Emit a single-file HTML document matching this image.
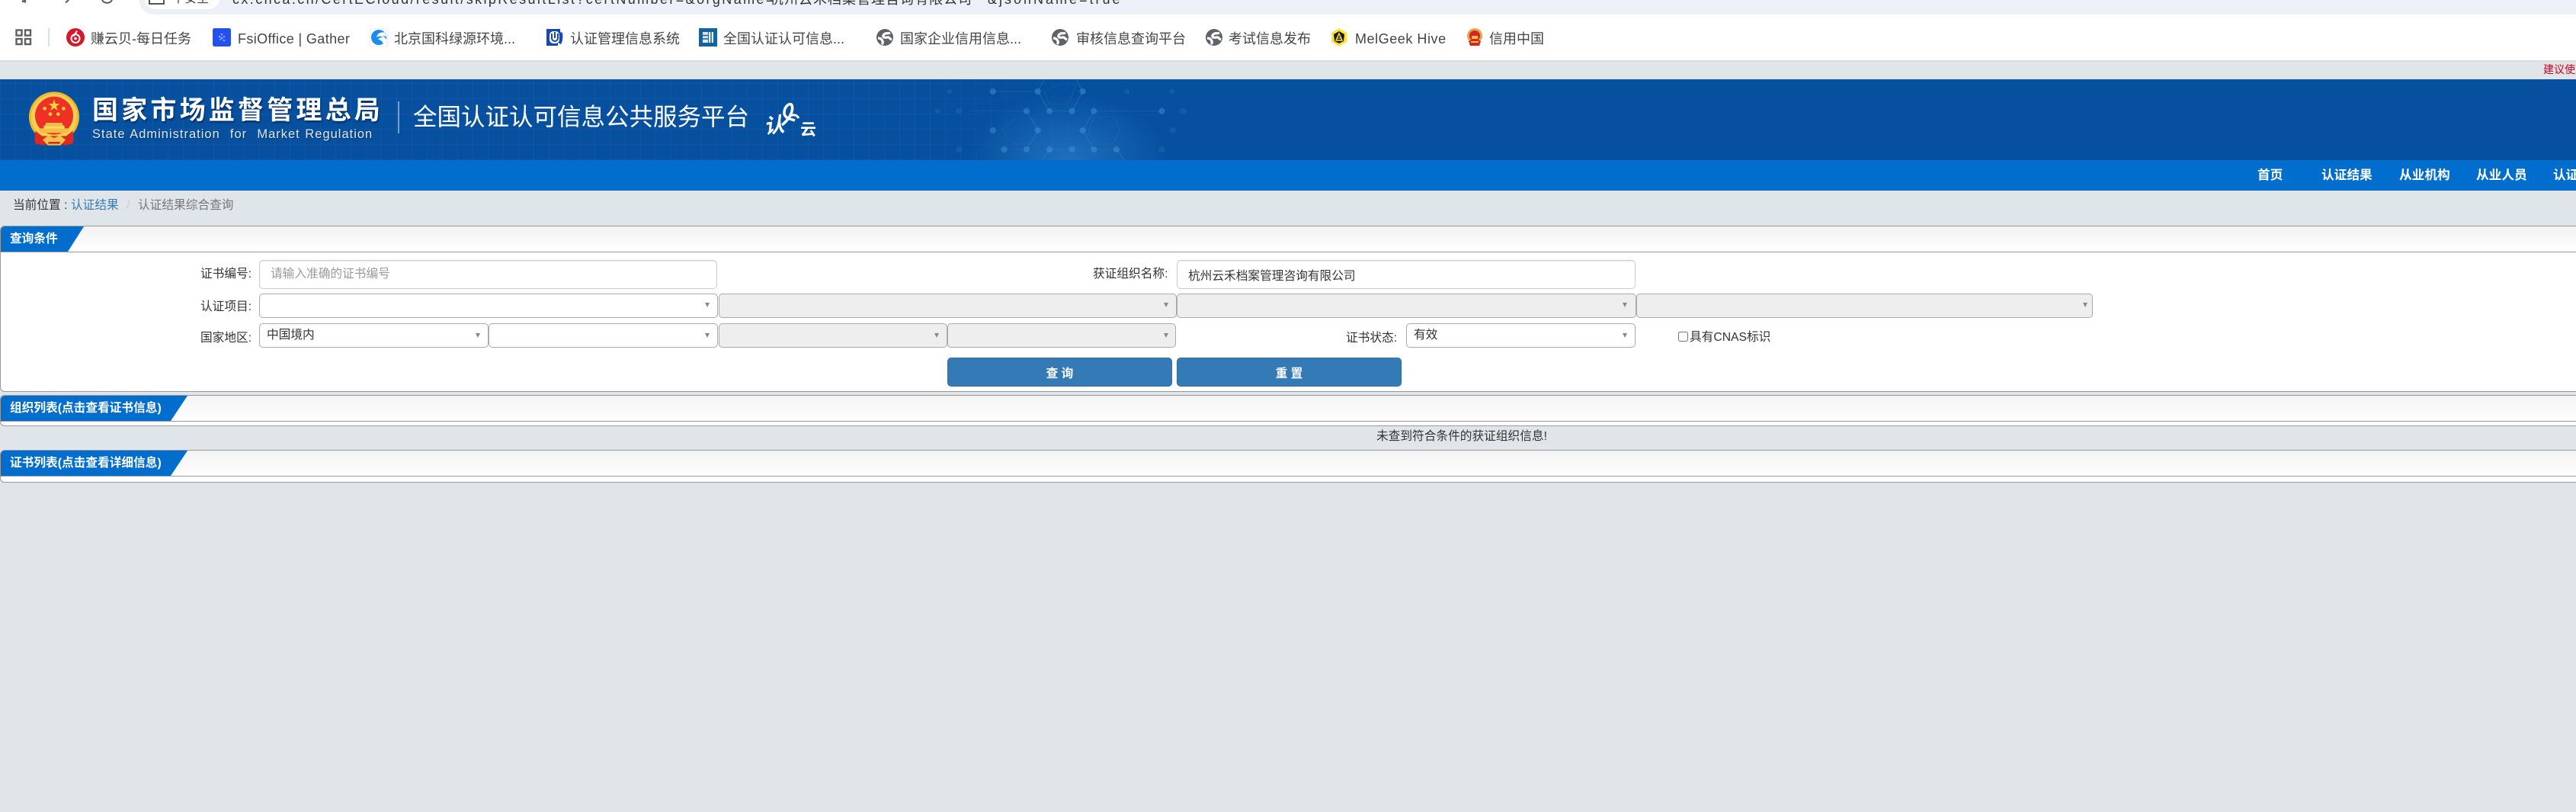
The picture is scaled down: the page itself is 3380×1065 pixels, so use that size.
<!DOCTYPE html>
<html lang="zh-CN"><head><meta charset="utf-8"><title>认证结果综合查询</title>
<style>
html,body{margin:0;padding:0;width:3380px;height:1065px;overflow:hidden;background:#e0e5ea}
body{position:relative;font-family:"Liberation Sans","Noto Sans CJK SC",sans-serif;color:#333}
.a{position:absolute}
.t{position:absolute;white-space:nowrap;line-height:20px;height:20px}
.bk{font-size:18px;color:#444;top:41px}
.ic{position:absolute;top:37px;width:24px;height:24px}
.nv{top:220px;color:#fff;font-weight:bold;font-size:16.7px}
.f{font-size:15.7px;color:#333}
.panel{position:absolute;left:0;width:3400px;box-sizing:border-box;border:1px solid #999;border-radius:6px;background:#fff;overflow:hidden}
.ph{position:absolute;left:0;top:0;right:0;height:33px;border-bottom:1px solid #999;background:linear-gradient(#f3f3f3,#fff)}
.tab{position:absolute;left:0;top:0;height:33px;background:#016dcd;color:#fff;font-weight:bold;font-size:15.7px;line-height:33px;padding-left:12px;box-sizing:border-box;white-space:nowrap}
input.tx,select{position:absolute;box-sizing:border-box;margin:0;border-radius:5px;font:15.7px "Liberation Sans","Noto Sans CJK SC",sans-serif;color:#333;outline:0}
input.tx{border:1.5px solid #ccc;height:38px;top:341px;padding:0 0 0 14px;background:#fff;box-shadow:inset 0 1px 1px rgba(0,0,0,.075)}
input.tx::placeholder{color:#999;opacity:1}
select{appearance:none;-webkit-appearance:none;border:1.5px solid #aaa;background:#fff;padding:0 0 2px 9px}
select:disabled{background:#eee;opacity:1}
.r2{top:385px;height:32px}.r3{top:424px;height:32px}
.ar{position:absolute;width:0;height:0;border-left:3.5px solid transparent;border-right:3.5px solid transparent;border-top:6px solid #888}
.btn{position:absolute;top:469px;height:38px;width:295px;box-sizing:border-box;background:#337ab7;border:1px solid #2e6da4;border-radius:5px;color:#fff;font:bold 15.7px "Liberation Sans","Noto Sans CJK SC",sans-serif;text-align:center;padding:0;margin:0}
</style></head><body>

<!-- browser top -->
<div class="a" style="left:0;top:0;width:3380px;height:79px;background:#fff"></div>
<div class="a" style="left:0;top:79px;width:3380px;height:2px;background:#dcdcdc"></div>
<div class="a" style="left:182px;top:-20px;width:3220px;height:39px;background:#ebf0f9;border-radius:0 0 0 20px"></div>
<div class="a" style="left:190px;top:-20px;width:98px;height:32px;background:#fff;border-radius:14px"></div>
<svg class="a" style="left:0;top:0" width="300" height="19" viewBox="0 0 300 19" fill="none" stroke="#555" stroke-width="2">
<path d="M34 0l-5 2.500M29 1l5 2"/><path d="M86 3.500l4-3.500"/><path d="M134 0a7 6 0 0 0 13 0"/><path d="M196 0v5h19v-5" stroke-width="2"/>
</svg>
<div class="t" style="left:226px;top:-11px;font-size:16px;color:#444">不安全</div>
<div class="t" style="left:305px;top:-11px;font-size:18px;color:#333;letter-spacing:2.4px">cx.cnca.cn/CertECloud/result/skipResultList?certNumber=&amp;orgName=</div>
<div class="t" style="left:1010px;top:-11px;font-size:18px;color:#333;letter-spacing:1px">杭州云禾档案管理咨询有限公司</div>
<div class="t" style="left:1296px;top:-11px;font-size:18px;color:#333;letter-spacing:3px">&amp;jsonName=true</div>

<svg class="a" style="left:20px;top:38px" width="22" height="22" viewBox="0 0 22 22" fill="none" stroke="#5f5f5f" stroke-width="2.400"><rect x="1.500" y="1.500" width="7" height="7"/><rect x="13" y="1.500" width="7" height="7"/><rect x="1.500" y="13" width="7" height="7"/><rect x="13" y="13" width="7" height="7"/></svg>
<div class="a" style="left:63px;top:37px;width:2px;height:24px;background:#d3e0f5"></div>

<!-- bookmarks -->
<svg class="ic" style="left:87px" viewBox="0 0 24 24"><circle cx="12" cy="12" r="12" fill="#d9172b"/><circle cx="12" cy="13.500" r="5.500" fill="none" stroke="#fff" stroke-width="2"/><path d="M14 3.500l-4.500 7" stroke="#fff" stroke-width="2"/><circle cx="12" cy="13.500" r="1.800" fill="#fff"/></svg>
<div class="t bk" style="left:119px">赚云贝-每日任务</div>
<svg class="ic" style="left:279px" viewBox="0 0 24 24"><rect width="24" height="24" rx="2.500" fill="#2450f2"/><g fill="#8fa8fa"><circle cx="9" cy="11" r="1.300"/><circle cx="12" cy="8" r="1.300"/><circle cx="12" cy="13" r="1.500"/><circle cx="15" cy="11" r="1.200"/><circle cx="15" cy="16" r="1.300"/><circle cx="10" cy="15" r="1"/></g></svg>
<div class="t bk" style="left:312px;letter-spacing:.38px">FsiOffice | Gather</div>
<svg class="ic" style="left:485px" viewBox="0 0 24 24"><rect x=".5" y=".5" width="23" height="23" fill="#fff" stroke="#eee"/><circle cx="12" cy="12" r="10" fill="#1a8cf0"/><path d="M20 6c-5-2-10 1-11 6 3-2 6-2 8 0-3 0-5 1-6 3 3 0 6 2 7 6l4-3-1-5-4-3 5 1z" fill="#fff"/></svg>
<div class="t bk" style="left:517px">北京国科绿源环境...</div>
<svg class="ic" style="left:716px" viewBox="0 0 24 24"><path d="M1 1h18v4l3 1c1 6 0 12-2 15l-4 2H1z" fill="#1747b5"/><rect x="5" y="4" width="13" height="16" rx="5" fill="#fff"/><path d="M8 7v6a4 4 0 0 0 8 0V7" fill="none" stroke="#1747b5" stroke-width="2"/><path d="M12 5v8" stroke="#1747b5" stroke-width="2"/><path d="M16 19l6 3v2h-6z" fill="#fff"/></svg>
<div class="t bk" style="left:748px">认证管理信息系统</div>
<svg class="ic" style="left:917px" viewBox="0 0 24 24"><rect width="24" height="24" fill="#12639f"/><rect x="5" y="5" width="7" height="14" fill="#d9e6f0"/><rect x="13" y="5" width="6" height="14" fill="#e9f1f7"/><path d="M5 9.500h7M5 14h7" stroke="#12639f" stroke-width="1.500"/><path d="M16 5v14" stroke="#12639f" stroke-width="1.500"/></svg>
<div class="t bk" style="left:949px">全国认证认可信息...</div>

<svg width="0" height="0" style="position:absolute"><defs><g id="gb"><circle cx="12" cy="12" r="11" fill="#5f6368"/><path d="M19 6C15 8 15 5 11 8 8 11 11 13 15 12 18 11 18 14 21 15" fill="none" stroke="#fff" stroke-width="3.200"/><path d="M3 13c3 0 5 1 6 4 1 2 0 3-1 4" fill="none" stroke="#fff" stroke-width="3.200"/></g></defs></svg>
<svg class="ic" style="left:1149px" viewBox="0 0 24 24"><use href="#gb"/></svg>
<div class="t bk" style="left:1181px">国家企业信用信息...</div>
<svg class="ic" style="left:1379px" viewBox="0 0 24 24"><use href="#gb"/></svg>
<div class="t bk" style="left:1412px">审核信息查询平台</div>
<svg class="ic" style="left:1581px" viewBox="0 0 24 24"><use href="#gb"/></svg>
<div class="t bk" style="left:1612px">考试信息发布</div>
<svg class="ic" style="left:1745px" viewBox="0 0 24 24"><path d="M12 0l10 6v12l-10 6-10-6V6z" fill="#fde23a"/><path d="M12 4l7 4-1 9-6 3-6-3-1-9z" fill="#1b1b1b"/><path d="M12 7l4 9h-8z" fill="none" stroke="#fde23a" stroke-width="1.500"/><path d="M9 13h6" stroke="#fde23a"/></svg>
<div class="t bk" style="left:1778px;letter-spacing:.55px">MelGeek Hive</div>
<svg class="ic" style="left:1923px" viewBox="0 0 24 24"><circle cx="12" cy="10" r="10" fill="#e0a94f"/><circle cx="12" cy="10" r="7" fill="#d7261e"/><rect x="8" y="10" width="8" height="4" fill="#eec14d"/><path d="M4 17l4-2 8 0 4 2-2 6H6z" fill="#d7261e"/><path d="M7 18h10" stroke="#eec14d" stroke-width="2"/></svg>
<div class="t bk" style="left:1954px">信用中国</div>

<div class="t" style="left:3337px;top:81px;font-size:14px;color:#d0021b">建议使用谷歌浏览器</div>

<!-- header -->
<div class="a" style="left:0;top:104px;width:3380px;height:106px;background:#07509f;overflow:hidden">
  <div class="a" style="left:0;top:0;width:1500px;height:106px;background-image:repeating-linear-gradient(90deg,rgba(255,255,255,.035) 0 1px,transparent 1px 20px),repeating-linear-gradient(0deg,rgba(255,255,255,.03) 0 1px,transparent 1px 20px);-webkit-mask-image:linear-gradient(90deg,#000 80%,transparent)"></div>
  <div class="a" style="left:1270px;top:20px;width:260px;height:170px;background:radial-gradient(closest-side,rgba(60,150,225,.45),rgba(60,150,225,0))"></div>
</div>
<svg class="a" style="left:1100px;top:0" width="1100" height="260" viewBox="0 0 1568 780" preserveAspectRatio="none">
<defs><clipPath id="hc"><rect x="0" y="312" width="1568" height="318"/></clipPath></defs>
<g clip-path="url(#hc)">
<g fill="none" stroke="#3d8fd4" stroke-opacity=".4" stroke-width="1.500">
<path d="M289 360H373M373 360L395 437M457 360L437 437M395 437H437M478 437H605M245 437H352M352 437L373 513M373 513L352 588M310 588H352M478 437L457 513M457 513L478 588M395 588H437M478 588H520M457 360L445 312M373 360L385 312M395 588L380 630M520 588L535 630"/>
<path d="M330 465H362L375 513 362 565H330L305 513ZM500 460H515L527 513 515 565H478L468 513 478 460Z M415 330H445L430 410H395L385 360Z" stroke-opacity=".2"/>
</g>
<g fill="#4a9bdc" fill-opacity=".42">
<ellipse cx="289" cy="360" rx="6" ry="12"/><ellipse cx="373" cy="360" rx="6" ry="12"/><ellipse cx="457" cy="360" rx="6" ry="12"/>
<ellipse cx="352" cy="437" rx="6" ry="12"/><ellipse cx="395" cy="437" rx="6" ry="12"/><ellipse cx="437" cy="437" rx="6" ry="12"/><ellipse cx="478" cy="437" rx="6" ry="12"/><ellipse cx="605" cy="437" rx="6" ry="12"/>
<ellipse cx="289" cy="513" rx="6" ry="12"/><ellipse cx="373" cy="513" rx="6" ry="12"/><ellipse cx="457" cy="513" rx="6" ry="12"/>
<ellipse cx="310" cy="588" rx="6" ry="12"/><ellipse cx="352" cy="588" rx="6" ry="12"/><ellipse cx="395" cy="588" rx="6" ry="12"/><ellipse cx="437" cy="588" rx="6" ry="12"/><ellipse cx="478" cy="588" rx="6" ry="12"/><ellipse cx="520" cy="588" rx="6" ry="12"/>
</g>
<g fill="#4a9bdc" fill-opacity=".16"><ellipse cx="226" cy="437" rx="6" ry="12"/><ellipse cx="185" cy="437" rx="5" ry="10"/><ellipse cx="226" cy="588" rx="6" ry="12"/><ellipse cx="625" cy="513" rx="6" ry="12"/><ellipse cx="605" cy="588" rx="6" ry="12"/><ellipse cx="645" cy="437" rx="6" ry="12"/><ellipse cx="208" cy="360" rx="5" ry="10"/><ellipse cx="624" cy="360" rx="5" ry="10"/><ellipse cx="540" cy="360" rx="5" ry="10"/></g>
</g></svg>

<svg class="a" style="left:0;top:100px" width="400" height="110" viewBox="0 0 1200 330">
<circle cx="213" cy="160" r="99" fill="#f0b92c"/><circle cx="213" cy="160" r="90" fill="#f7cf55"/>
<path d="M140 215c-5 25-5 40 0 50l30 7 30-10h26l30 10 30-7c5-10 5-25 0-50l-25 20H165z" fill="#dc2a20"/>
<circle cx="213" cy="155" r="75" fill="#ee3124"/>
<path d="M150 205h126l-10 18H160z" fill="#f2bf3e"/>
<path d="M180 183h66v7l8 6H172l8-6z" fill="#f2bf3e"/><rect x="172" y="196" width="82" height="10" fill="#f8d76e"/>
<path d="M168 250l22-17 23 10 23-10 22 17-20 22h-50z" fill="#f1c34a"/><path d="M190 258h46v8h-46z" fill="#dc2a20"/>
<path d="M213 92l5.500 16h17l-14 10 5.500 17-14-10-14 10 5.500-17-14-10h17z" fill="#f8d040"/>
<g fill="#f8d040"><circle cx="176" cy="127" r="7"/><circle cx="250" cy="127" r="7"/><circle cx="198" cy="149" r="7"/><circle cx="229" cy="149" r="7"/></g>
</svg>
<div class="t" style="left:121px;top:128px;height:34px;line-height:34px;font-size:34px;font-weight:bold;color:#fff;letter-spacing:4.2px;text-shadow:1px 2px 2px rgba(0,20,60,.6)">国家市场监督管理总局</div>
<div class="t" style="left:121px;top:166px;font-size:16.500px;color:#dfe8f2;letter-spacing:1px;word-spacing:1px;text-shadow:1px 1px 1px rgba(0,20,60,.5)">State Administration &nbsp;for &nbsp;Market Regulation</div>
<div class="a" style="left:522px;top:133px;width:2px;height:42px;background:rgba(255,255,255,.45)"></div>
<div class="t" style="left:542px;top:136px;height:34px;line-height:34px;font-size:31.500px;color:#fff">全国认证认可信息公共服务平台</div>
<div class="t" style="left:1002px;top:150px;height:30px;line-height:30px;font-size:27px;font-style:italic;font-weight:bold;color:#fff;transform:rotate(-8deg)">认</div>
<svg class="a" style="left:1020px;top:134px" width="36" height="36" viewBox="0 0 36 36" fill="none" stroke="#fff"><path d="M6 30C14 24 22 12 19 4 17 0 9 5 9 14c0 7 8 8 14 10" stroke-width="3.500"/><path d="M17 18c4-2 8-2 11 3" stroke-width="3"/></svg>
<div class="t" style="left:1050px;top:160px;height:22px;line-height:22px;font-size:21px;font-weight:bold;color:#fff">云</div>

<!-- nav -->
<div class="a" style="left:0;top:210px;width:3380px;height:40px;background:#016dcd"></div>
<div class="t nv" style="left:2962px">首页</div>
<div class="t nv" style="left:3046px">认证结果</div>
<div class="t nv" style="left:3148px">从业机构</div>
<div class="t nv" style="left:3249px">从业人员</div>
<div class="t nv" style="left:3350px">认证培训</div>

<!-- breadcrumb -->
<div class="t f" style="left:17px;top:260px">当前位置 :</div>
<div class="t f" style="left:93px;top:260px;color:#337ab7">认证结果</div>
<div class="t f" style="left:166px;top:260px;color:#ccc">/</div>
<div class="t f" style="left:181px;top:260px;color:#777">认证结果综合查询</div>

<!-- panel 1 -->
<div class="panel" style="top:296px;height:218px"><div class="ph"></div><div class="tab" style="width:109px;clip-path:polygon(0 0,109px 0,88px 100%,0 100%)">查询条件</div></div>

<div class="t f" style="left:263px;top:350px">证书编号:</div>
<input class="tx" style="left:340px;width:601px" placeholder="请输入准确的证书编号">
<div class="t f" style="left:1434px;top:350px">获证组织名称:</div>
<input class="tx" style="left:1544px;width:602px" value="杭州云禾档案管理咨询有限公司">

<div class="t f" style="left:263px;top:393px">认证项目:</div>
<select class="r2" style="left:340px;width:602px"><option></option></select>
<select class="r2" style="left:943px;width:601px" disabled><option></option></select>
<select class="r2" style="left:1544px;width:603px" disabled><option></option></select>
<select class="r2" style="left:2147px;width:599px" disabled><option></option></select>
<i class="ar" style="left:925px;top:397px"></i><i class="ar" style="left:1527px;top:397px"></i><i class="ar" style="left:2129px;top:397px"></i><i class="ar" style="left:2733px;top:397px"></i>

<div class="t f" style="left:263px;top:434px">国家地区:</div>
<select class="r3" style="left:340px;width:301px"><option>中国境内</option></select>
<select class="r3" style="left:641px;width:301px"><option></option></select>
<select class="r3" style="left:943px;width:300px" disabled><option></option></select>
<select class="r3" style="left:1243px;width:300px" disabled><option></option></select>
<i class="ar" style="left:624px;top:437px"></i><i class="ar" style="left:925px;top:437px"></i><i class="ar" style="left:1226px;top:437px"></i><i class="ar" style="left:1527px;top:437px"></i>

<div class="t f" style="left:1766px;top:434px">证书状态:</div>
<select class="r3" style="left:1845px;width:301px"><option>有效</option></select>
<i class="ar" style="left:2129px;top:437px"></i>
<input type="checkbox" class="a" style="left:2202px;top:435px;width:13px;height:13px;margin:0">
<div class="t f" style="left:2217px;top:433px">具有CNAS标识</div>

<button class="btn" style="left:1243px">查 询</button>
<button class="btn" style="left:1544px">重 置</button>

<!-- panel 2 -->
<div class="panel" style="top:518px;height:41px"><div class="ph"></div><div class="tab" style="width:245px;clip-path:polygon(0 0,245px 0,223px 100%,0 100%)">组织列表(点击查看证书信息)</div></div>
<div class="t f" style="left:1806px;top:563px">未查到符合条件的获证组织信息!</div>
<!-- panel 3 -->
<div class="panel" style="top:590px;height:43px"><div class="ph"></div><div class="tab" style="width:245px;clip-path:polygon(0 0,245px 0,223px 100%,0 100%)">证书列表(点击查看详细信息)</div></div>
</body></html>
